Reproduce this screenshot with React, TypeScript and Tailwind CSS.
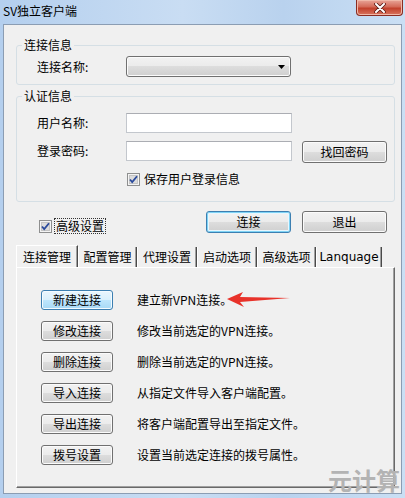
import React from 'react';

const font = "font-['Noto_Sans_CJK_SC',sans-serif]";

const btnBase =
  'flex items-center justify-center rounded-[3px] border text-[12px] text-black';
const btnNormal =
  'border-[#707070] bg-[linear-gradient(#f2f2f2_0%,#ebebeb_50%,#dddddd_50%,#cfcfcf_100%)] shadow-[inset_0_0_0_1px_#fbfbfb]';
const btnFocus =
  'border-[#3c7fb1] bg-[linear-gradient(#eaf6fd_0%,#d9f0fc_50%,#bee6fd_50%,#a7d9f5_100%)] shadow-[inset_0_0_0_1px_#f4fbff]';
const btnDefault =
  'border-[#3c7fb1] bg-[linear-gradient(#f2f2f2_0%,#ebebeb_50%,#dddddd_50%,#cfcfcf_100%)] shadow-[inset_0_0_0_1px_#7fd3f5,inset_0_0_0_2px_#e8f6fd]';

const Checkbox: React.FC = () => (
  <svg width="13" height="13" viewBox="0 0 13 13" className="shrink-0">
    <rect x="0.5" y="0.5" width="12" height="12" fill="#f4f4f4" stroke="#8e8f8f" />
    <rect x="2.5" y="2.5" width="8" height="8" fill="#dcdcdc" stroke="#c4c4c4" />
    <path d="M3 6.5 L5.2 9 L10 3.2" fill="none" stroke="#2a4a9c" strokeWidth="1.8" />
  </svg>
);

const Arrow: React.FC = () => (
  <svg width="66" height="18" viewBox="0 0 66 18" className="ml-[-6px]">
    <polygon points="1,8 17,1 14,6 64,7 14,11 18,16" fill="#e8322a" />
  </svg>
);

const tabs = [
  { label: '连接管理', w: 'w-[62px]' },
  { label: '配置管理', w: 'w-[59px]' },
  { label: '代理设置', w: 'w-[60px]' },
  { label: '启动选项', w: 'w-[60px]' },
  { label: '高级选项', w: 'w-[59px]' },
  { label: 'Lanquage', w: 'w-[66px]' },
];

const actions = [
  { btn: '新建连接', desc: '建立新VPN连接。', focus: true },
  { btn: '修改连接', desc: '修改当前选定的VPN连接。' },
  { btn: '删除连接', desc: '删除当前选定的VPN连接。' },
  { btn: '导入连接', desc: '从指定文件导入客户端配置。' },
  { btn: '导出连接', desc: '将客户端配置导出至指定文件。' },
  { btn: '拨号设置', desc: '设置当前选定连接的拨号属性。' },
];

export default function App() {
  return (
    <div
      className={`${font} flex h-[498px] w-[405px] flex-col bg-[linear-gradient(90deg,#b4cfee,#c9ddf3_45%,#b9d2ee_70%,#cadff4)] text-[12px] text-black`}
    >
      {/* title bar */}
      <div className="flex h-[24px] shrink-0 items-start justify-between">
        <span className="mt-[3px] pl-[3px] text-[12px] leading-[16px]">SV独立客户端</span>
        <div className="mr-[2px] flex h-[16px] w-[47px] items-center justify-center rounded-b-[4px] border border-t-0 border-[#8a2c22] bg-[linear-gradient(#e8a598_0%,#d46a58_45%,#c2412c_55%,#d8745e_100%)] shadow-[inset_0_0_0_1px_#f0b8a8]">
          <svg width="12" height="10" viewBox="0 0 12 10">
            <path d="M2 1 L10 9 M10 1 L2 9" stroke="#5a1a14" strokeWidth="3.6" strokeLinecap="round" />
            <path d="M2 1 L10 9 M10 1 L2 9" stroke="#ffffff" strokeWidth="2" strokeLinecap="round" />
          </svg>
        </div>
      </div>

      {/* client area */}
      <div className="relative mx-[3px] h-[470px] border border-[#8b9db3] bg-[#f0f0f0] pl-[12px] pr-[6px]">
        {/* 连接信息 */}
        <fieldset className="mt-[12px] rounded-[3px] border border-[#d5dfe5] pb-[7px]">
          <legend className="ml-[5px] px-[2px] leading-[16px]">连接信息</legend>
          <div className="mt-[3px] flex items-center pl-[20px]">
            <span className="w-[89px]">连接名称:</span>
            <div className="flex h-[21px] w-[165px] items-center justify-end rounded-[3px] border border-[#707070] bg-[linear-gradient(#f2f2f2_0%,#ebebeb_50%,#dddddd_50%,#cfcfcf_100%)] pr-[5px] shadow-[inset_0_0_0_1px_#fbfbfb]">
              <svg width="7" height="4" viewBox="0 0 7 4">
                <polygon points="0,0 7,0 3.5,4" fill="#000" />
              </svg>
            </div>
          </div>
        </fieldset>

        {/* 认证信息 */}
        <fieldset className="mt-[3px] rounded-[3px] border border-[#d5dfe5] pb-[14px]">
          <legend className="ml-[5px] px-[2px] leading-[16px]">认证信息</legend>
          <div className="mt-[9px] flex h-[20px] items-center pl-[20px]">
            <span className="w-[89px]">用户名称:</span>
            <div className="h-[20px] w-[166px] border border-[#c3c7cd] border-t-[#abadb3] bg-white" />
          </div>
          <div className="mt-[8px] flex h-[22px] items-start pl-[20px]">
            <span className="flex h-[20px] w-[89px] items-center">登录密码:</span>
            <div className="h-[20px] w-[166px] border border-[#c3c7cd] border-t-[#abadb3] bg-white" />
            <button className={`${btnBase} ${btnNormal} ml-[10px] h-[22px] w-[85px]`}>找回密码</button>
          </div>
          <div className="mt-[8px] flex h-[16px] items-center gap-[4px] pl-[110px]">
            <Checkbox />
            <span>保存用户登录信息</span>
          </div>
        </fieldset>

        {/* 高级设置 + 按钮 */}
        <div className="mt-[9px] flex h-[22px] items-start">
          <div className="mt-[7px] ml-[23px] flex w-[167px] items-center gap-[2px]">
            <Checkbox />
            <span className="border border-dotted border-[#333] px-px leading-[14px]">高级设置</span>
          </div>
          <button className={`${btnBase} ${btnDefault} h-[22px] w-[85px]`}>连接</button>
          <button className={`${btnBase} ${btnNormal} ml-[11px] h-[22px] w-[85px]`}>退出</button>
        </div>

        {/* tabs */}
        <div className="mt-[12px] flex h-[22px] items-end">
          {tabs.map((t, i) => (
            <div
              key={t.label}
              className={`${t.w} flex items-center justify-center border-l border-l-white border-r border-r-[#4a4a4a] shadow-[inset_-1px_0_0_#a0a0a0] ${
                i === 0 ? 'h-[22px] border-t border-t-white' : 'h-[20px]'
              } ${i === 5 ? "font-['DejaVu_Sans',sans-serif]" : ''}`}
            >
              {t.label}
            </div>
          ))}
        </div>

        {/* tab panel */}
        <div className="flex h-[221px] w-[379px] flex-col gap-[11px] border border-l-white border-t-white border-r-[#696969] border-b-[#696969] pl-[24px] pt-[22px] shadow-[inset_-1px_-1px_0_#a0a0a0]">
          {actions.map((a) => (
            <div key={a.btn} className="flex h-[20px] items-center">
              <button className={`${btnBase} ${a.focus ? btnFocus : btnNormal} h-[20px] w-[72px] shrink-0`}>
                {a.btn}
              </button>
              <span className="ml-[24px]">{a.desc}</span>
              {a.focus && <Arrow />}
            </div>
          ))}
        </div>

        {/* watermark */}
        <div className="absolute bottom-[-1px] right-[1px] text-[24px] leading-[28px] font-bold text-[#b3b3b3]">
          元计算
        </div>
      </div>
    </div>
  );
}
